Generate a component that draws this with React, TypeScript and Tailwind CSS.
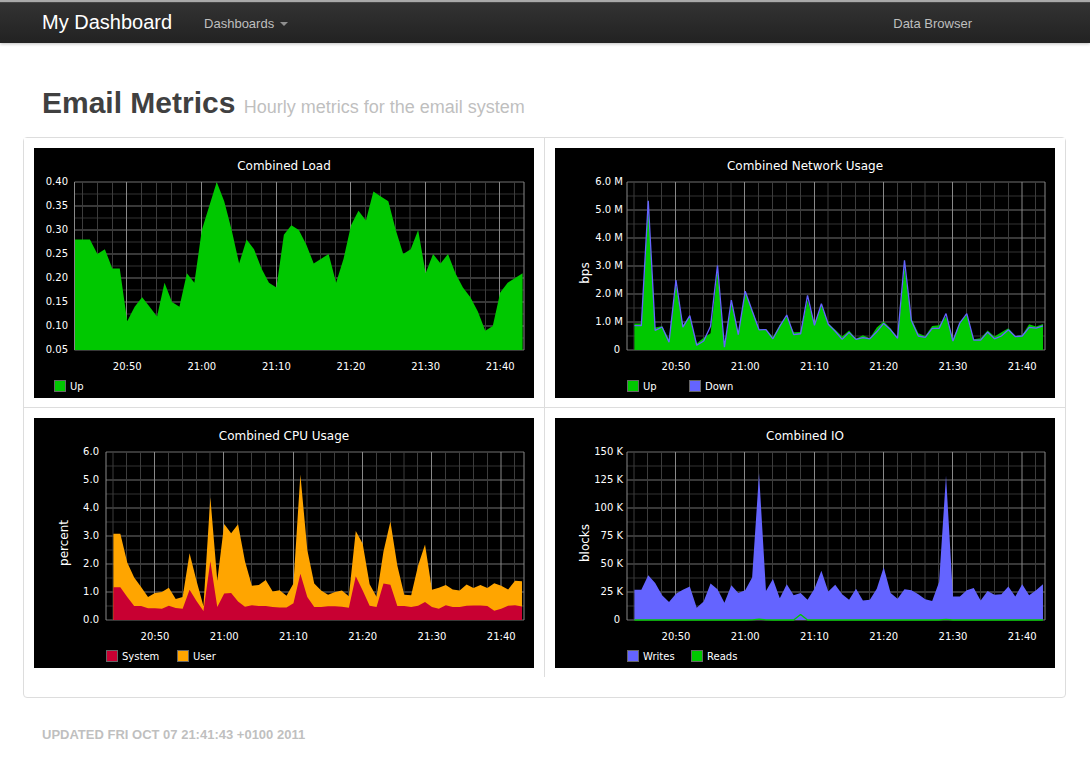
import React from "react";

type Series = {
  name: string;
  color: string;
  values: number[];
  kind: "area" | "line";
  legendX: number;
};

type ChartSpec = {
  title: string;
  unit?: string;
  plotLeft: number;
  dataLeft: number;
  minuteWidth: number;
  startMinute: number;
  softMinutes: number[];
  min: number;
  max: number;
  ticks: string[];
  series: Series[];
};

const TOP = 34;
const BOTTOM = 202;
const RIGHT = 490;
const END_MINUTE = 103;

const GREEN = "#00c800";
const BLUE = "#6464ff";
const ORANGE = "#ffa500";
const RED = "#c80032";

const wide = {
  plotLeft: 72,
  dataLeft: 79.4,
  minuteWidth: 6.925,
  startMinute: 44,
  softMinutes: [44, 58, 72, 86, 100],
};

const charts: ChartSpec[] = [
  {
    title: "Combined Load",
    plotLeft: 40.5,
    dataLeft: 41,
    minuteWidth: 7.46,
    startMinute: 43,
    softMinutes: [88],
    min: 0.05,
    max: 0.4,
    ticks: ["0.05", "0.10", "0.15", "0.20", "0.25", "0.30", "0.35", "0.40"],
    series: [
      {
        name: "Up", color: GREEN, kind: "area", legendX: 20,
        values: [
          0.28, 0.28, 0.28, 0.25, 0.26, 0.22, 0.22, 0.11, 0.14, 0.16, 0.14, 0.12, 0.19, 0.15, 0.14, 0.21, 0.19, 0.3,
          0.35, 0.4, 0.36, 0.3, 0.23, 0.28, 0.26, 0.22, 0.19, 0.18, 0.29, 0.31, 0.3, 0.27, 0.23, 0.24, 0.25, 0.19,
          0.24, 0.31, 0.34, 0.32, 0.38, 0.37, 0.36, 0.3, 0.25, 0.26, 0.3, 0.21, 0.25, 0.23, 0.25, 0.21, 0.18, 0.16,
          0.13, 0.09, 0.1, 0.17, 0.19, 0.2, 0.21,
        ],
      },
    ],
  },
  {
    ...wide,
    title: "Combined Network Usage",
    unit: "bps",
    min: 0,
    max: 6,
    ticks: ["0", "1.0 M", "2.0 M", "3.0 M", "4.0 M", "5.0 M", "6.0 M"],
    series: [
      {
        name: "Up", color: GREEN, kind: "area", legendX: 72,
        values: [
          0.95, 0.95, 5.1, 0.8, 0.85, 0.38, 2.35, 0.88, 1.2, 0.23, 0.44, 0.6, 2.8, 0.12, 1.68, 0.62, 2.07, 1.45, 0.74,
          0.75, 0.46, 0.9, 1.2, 0.63, 0.64, 1.78, 0.95, 1.6, 0.95, 0.72, 0.48, 0.7, 0.4, 0.53, 0.42, 0.8, 1.02, 0.77,
          0.45, 2.95, 1.12, 0.6, 0.5, 0.86, 0.88, 1.2, 0.38, 1.0, 1.25, 0.38, 0.42, 0.7, 0.48, 0.63, 0.78, 0.5, 0.53,
          0.92, 0.84, 0.93,
        ],
      },
      {
        name: "Down", color: BLUE, kind: "line", legendX: 134,
        values: [
          0.87, 0.87, 5.33, 0.7, 0.82, 0.28, 2.5, 0.82, 1.23, 0.17, 0.32, 0.85, 3.02, 0.1, 1.78, 0.55, 2.1, 1.4, 0.72,
          0.73, 0.4, 0.85, 1.25, 0.55, 0.58, 1.95, 0.88, 1.65, 0.92, 0.67, 0.38, 0.63, 0.38, 0.44, 0.4, 0.65, 0.95,
          0.72, 0.42, 3.2, 1.05, 0.5, 0.45, 0.77, 0.77, 1.3, 0.32, 0.97, 1.3, 0.35, 0.35, 0.64, 0.4, 0.5, 0.72, 0.48,
          0.5, 0.81, 0.78, 0.86,
        ],
      },
    ],
  },
  {
    ...wide,
    title: "Combined CPU Usage",
    unit: "percent",
    min: 0,
    max: 6,
    ticks: ["0.0", "1.0", "2.0", "3.0", "4.0", "5.0", "6.0"],
    series: [
      {
        name: "User", color: ORANGE, kind: "area", legendX: 143,
        values: [
          3.08, 3.08, 2.05, 1.52, 1.18, 0.82, 0.96, 1.0, 1.15, 0.75, 0.82, 2.38, 1.4, 0.5, 4.38, 1.4, 3.43, 3.1, 3.42,
          2.1, 1.22, 1.25, 1.43, 1.02, 1.06, 0.87, 1.3, 5.2, 2.5, 1.3, 1.05, 0.9, 1.0, 1.05, 0.85, 3.18, 2.72, 1.28,
          0.83, 2.45, 3.52, 1.95, 0.9, 0.88, 1.95, 2.7, 1.08, 1.15, 1.25, 1.09, 1.05, 1.27, 1.14, 1.25, 1.14, 1.31,
          1.22, 1.09, 1.4, 1.38,
        ],
      },
      {
        name: "System", color: RED, kind: "area", legendX: 72,
        values: [
          1.17, 1.17, 0.82, 0.5, 0.5, 0.42, 0.42, 0.4, 0.51, 0.43, 0.4, 1.08, 0.68, 0.32, 2.1, 0.46, 0.95, 0.96, 0.66,
          0.47, 0.53, 0.5, 0.5, 0.46, 0.45, 0.45, 0.6, 1.65, 0.82, 0.46, 0.46, 0.49, 0.49, 0.47, 0.44, 1.56, 1.05,
          0.51, 0.46, 1.3, 1.26, 0.5, 0.5, 0.46, 0.51, 0.64, 0.46, 0.4, 0.53, 0.46, 0.46, 0.51, 0.52, 0.52, 0.5, 0.33,
          0.4, 0.51, 0.53, 0.48,
        ],
      },
    ],
  },
  {
    ...wide,
    title: "Combined IO",
    unit: "blocks",
    min: 0,
    max: 150,
    ticks: ["0", "25 K", "50 K", "75 K", "100 K", "125 K", "150 K"],
    series: [
      {
        name: "Writes", color: BLUE, kind: "area", legendX: 72,
        values: [
          27, 27, 40, 33, 22, 16, 23.5, 27, 30, 11, 16.5, 32.5, 27.5, 15.5, 31, 24, 26.5, 38, 131, 26, 36.5, 19.5, 32,
          22, 24, 18, 28, 44, 25.5, 31.5, 23, 18, 28, 17.5, 18, 28, 47, 24, 19, 27.5, 26.5, 23, 18.5, 17, 34, 129, 21,
          21, 26.5, 28.5, 17.5, 26, 22.5, 23, 30, 21, 32, 22, 26.5, 32,
        ],
      },
      {
        name: "Reads", color: GREEN, kind: "line", legendX: 136,
        values: [
          0, 0, 0, 0, 0, 0, 0, 0, 0, 0, 0, 0, 0, 0, 0, 0, 0, 0.2, 0.8, 0.2, 0, 0, 0, 0, 5, 0, 0, 0, 0, 0, 0, 0, 0, 0, 0,
          0, 0, 0, 0, 0, 0, 0, 0, 0, 0, 0.6, 0, 0, 0, 0, 0, 0, 0, 0, 0, 0, 0, 0, 0, 0,
        ],
      },
    ],
  },
];

function timeLabel(minute: number) {
  const hour = 20 + Math.floor(minute / 60);
  return `${hour}:${String(minute % 60).padStart(2, "0")}`;
}

function Chart({ spec }: { spec: ChartSpec }) {
  const xOf = (minute: number) => spec.dataLeft + (minute - spec.startMinute) * spec.minuteWidth;
  const yOf = (value: number) => BOTTOM - ((value - spec.min) / (spec.max - spec.min)) * (BOTTOM - TOP);
  const gridX = (minute: number) => {
    const x = xOf(minute) - 0.3;
    return spec.softMinutes.includes(minute) ? Math.round(x) : Math.floor(x) + 0.5;
  };

  const minutes: number[] = [];
  for (let m = 44; m < END_MINUTE; m += 2) minutes.push(m);
  const steps = spec.ticks.length - 1;
  const stepHeight = (BOTTOM - TOP) / steps;
  const legend = [...spec.series].sort((a, b) => a.legendX - b.legendX);

  return (
    <svg
      viewBox="0 0 500 250"
      role="img"
      aria-label={spec.title}
      className="block h-auto w-full bg-black font-['DejaVu_Sans',sans-serif] text-[10px]"
      fill="#fff"
    >
      <text x={250} y={22} textAnchor="middle" fontSize={12}>{spec.title}</text>
      {spec.unit && (
        <text transform="translate(34 125) rotate(-90)" textAnchor="middle" fontSize={12}>{spec.unit}</text>
      )}

      {spec.ticks.map((tick, i) => {
        const y = BOTTOM - i * stepHeight;
        const labelX = spec.plotLeft < 50 ? 34 : tick.length > 3 ? 68 : 65;
        return (
          <g key={tick}>
            {i < steps && (
              <line x1={spec.plotLeft} x2={RIGHT} y1={y - stepHeight / 2} y2={y - stepHeight / 2} stroke="#333" />
            )}
            <line x1={spec.plotLeft} x2={RIGHT} y1={y} y2={y} stroke="#707070" />
            <text x={labelX} y={y + 3} textAnchor="end">{tick}</text>
          </g>
        );
      })}

      {minutes.map((m) => {
        const x = gridX(m);
        const major = m % 10 === 0;
        return (
          <g key={m}>
            <line x1={x} x2={x} y1={TOP} y2={BOTTOM} stroke={major ? "#888" : "#3c3c3c"} />
            {major && <text x={xOf(m)} y={222} textAnchor="middle">{timeLabel(m)}</text>}
          </g>
        );
      })}
      <line x1={spec.plotLeft} x2={spec.plotLeft} y1={TOP} y2={BOTTOM} stroke="#888" />
      <line x1={RIGHT} x2={RIGHT} y1={TOP} y2={BOTTOM} stroke="#888" />

      {spec.series.map((s) => {
        const points = s.values.map((v, i) => `${xOf(spec.startMinute + i).toFixed(2)},${yOf(v).toFixed(2)}`).join(" ");
        return s.kind === "area" ? (
          <polygon
            key={s.name}
            points={`${spec.dataLeft},${BOTTOM} ${points} ${xOf(END_MINUTE).toFixed(2)},${BOTTOM}`}
            fill={s.color}
          />
        ) : (
          <polyline key={s.name} points={points} fill="none" stroke={s.color} strokeWidth={1.3} strokeLinejoin="bevel" />
        );
      })}

      {legend.map((s) => (
        <g key={s.name}>
          <rect x={s.legendX + 0.5} y={232.5} width={11} height={11} fill={s.color} stroke="#666" />
          <text x={s.legendX + 16} y={242}>{s.name}</text>
        </g>
      ))}
    </svg>
  );
}

export default function App() {
  return (
    <div className="bg-white font-['Liberation_Sans',Arial,sans-serif] text-[13px] leading-[18px] text-[#404040]">
      <header className="border-t-2 border-[#a9a9a9] bg-linear-to-b from-[#333] to-[#222] shadow-[0_1px_3px_rgba(0,0,0,0.25),inset_0_1px_0_rgba(255,255,255,0.1)]">
        <nav className="flex h-[41px] items-center pr-[118px] pl-[42px]" aria-label="Main">
          <a href="#" className="mr-8 pb-0.5 text-[20px] leading-5 text-white">My Dashboard</a>
          <button type="button" className="flex items-center gap-1.5 pt-0.5 text-[#bfbfbf]">
            Dashboards
            <svg viewBox="0 0 8 4" className="h-1 w-2" aria-hidden="true">
              <path d="M0 0h8L4 4z" fill="#8f8f8f" />
            </svg>
          </button>
          <a href="#" className="ml-auto pt-0.5 text-[#bfbfbf]">Data Browser</a>
        </nav>
      </header>

      <main>
        <h1 className="mt-[42px] px-[42px] text-[30px] leading-9 font-bold">
          Email Metrics <small className="text-[18px] font-normal text-[#bfbfbf]">Hourly metrics for the email system</small>
        </h1>

        <section className="mt-3 mr-6 ml-[23px] rounded-[4px] border border-[#ddd] pb-5" aria-label="Charts">
          <div className="grid grid-cols-2 gap-px bg-[#ddd]">
            {charts.map((spec) => (
              <div key={spec.title} className="bg-white px-[10px] pt-[10px] pb-[9px]">
                <Chart spec={spec} />
              </div>
            ))}
          </div>
        </section>
      </main>

      <footer className="px-[42px] pt-7 pb-8 font-bold text-[#bfbfbf] uppercase">
        Updated Fri Oct 07 21:41:43 +0100 2011
      </footer>
    </div>
  );
}
